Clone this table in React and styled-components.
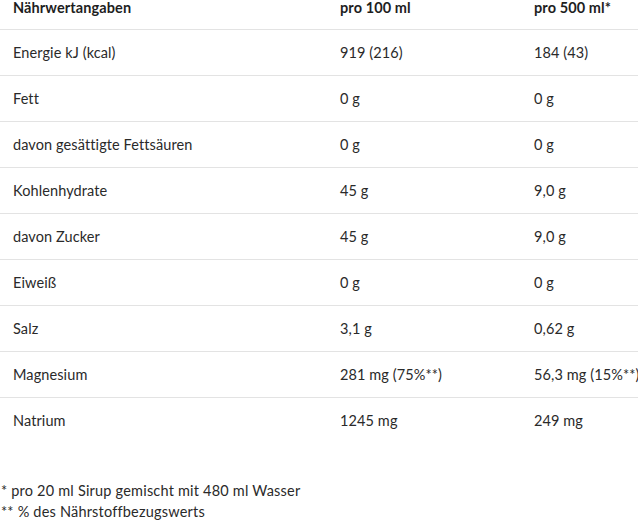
import React from "react";
import styled, { createGlobalStyle } from "styled-components";

const GlobalStyle = createGlobalStyle`
  html, body {
    margin: 0;
    padding: 0;
    background: #ffffff;
  }
  body {
    font-family: Lato, "Liberation Sans", Arial, sans-serif;
    color: #222222;
    overflow: hidden;
  }
`;

const Wrapper = styled.section`
  width: 638px;
  overflow: hidden;
`;

const Table = styled.table`
  width: 100%;
  border-collapse: collapse;
  table-layout: fixed;
  font-size: 14.5px;
  letter-spacing: 0.1px;
`;

const HeadCell = styled.th`
  height: 29px;
  padding: 0 0 0 13px;
  vertical-align: top;
  line-height: 15px;
  text-align: left;
  font-weight: 700;
  color: #1e1e1e;
  white-space: nowrap;
  border-bottom: 1px solid #e3e3e3;
`;

const Row = styled.tr`
  border-bottom: 1px solid #e3e3e3;

  &:last-child {
    border-bottom: none;
  }
`;

const Cell = styled.td`
  height: 45px;
  padding: 0 0 0 13px;
  white-space: nowrap;
  color: #2a2a2a;
`;

const Notes = styled.div`
  margin-top: 37px;
  padding-left: 1px;
  font-size: 14.5px;
  letter-spacing: 0.2px;
  line-height: 21px;
  color: #2a2a2a;
`;

const rows = [
  ["Energie kJ (kcal)", "919 (216)", "184 (43)"],
  ["Fett", "0 g", "0 g"],
  ["davon gesättigte Fettsäuren", "0 g", "0 g"],
  ["Kohlenhydrate", "45 g", "9,0 g"],
  ["davon Zucker", "45 g", "9,0 g"],
  ["Eiweiß", "0 g", "0 g"],
  ["Salz", "3,1 g", "0,62 g"],
  ["Magnesium", "281 mg (75%**)", "56,3 mg (15%**)"],
  ["Natrium", "1245 mg", "249 mg"],
];

export default function App() {
  return (
    <Wrapper>
      <GlobalStyle />
      <Table>
        <colgroup>
          <col style={{ width: 327 }} />
          <col style={{ width: 194 }} />
          <col />
        </colgroup>
        <thead>
          <tr>
            <HeadCell>Nährwertangaben</HeadCell>
            <HeadCell>pro 100 ml</HeadCell>
            <HeadCell>pro 500 ml*</HeadCell>
          </tr>
        </thead>
        <tbody>
          {rows.map(([name, a, b]) => (
            <Row key={name}>
              <Cell>{name}</Cell>
              <Cell>{a}</Cell>
              <Cell>{b}</Cell>
            </Row>
          ))}
        </tbody>
      </Table>
      <Notes>
        <div>* pro 20 ml Sirup gemischt mit 480 ml Wasser</div>
        <div>** % des Nährstoffbezugswerts</div>
      </Notes>
    </Wrapper>
  );
}
